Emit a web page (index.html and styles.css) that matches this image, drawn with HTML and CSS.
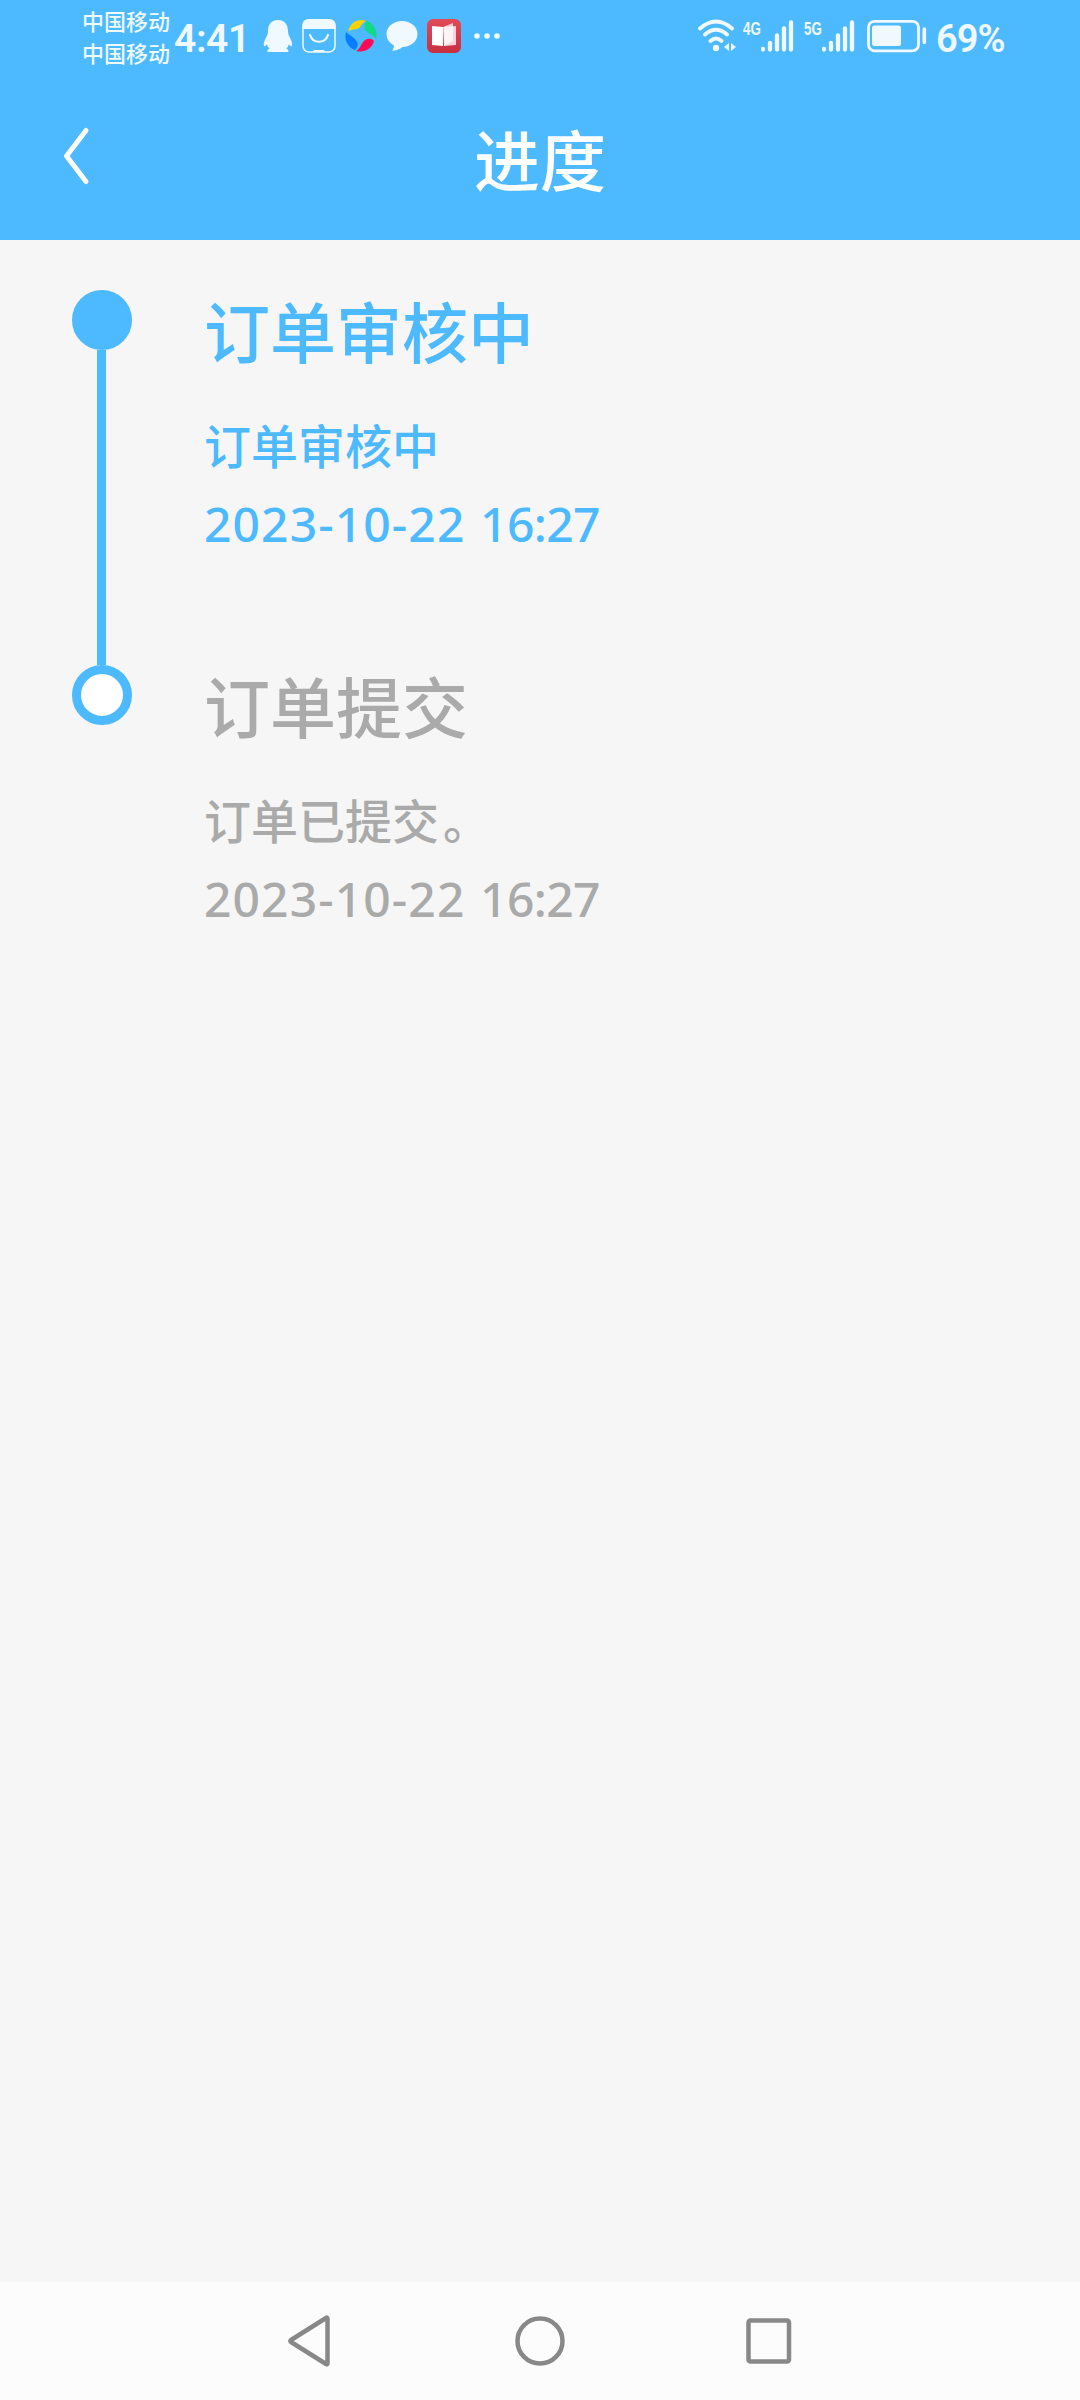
FILE: index.html
```html
<!DOCTYPE html>
<html lang="zh-CN">
<head>
<meta charset="utf-8">
<title>进度</title>
<link rel="stylesheet" href="styles.css">
</head>
<body>
<div class="screen">
  <header class="top">
    <div class="status">
      <div class="carriers"><span>中国移动</span><span>中国移动</span></div>
      <span class="clock">4:41</span>
      <div class="notices">
        <svg width="30" height="36" viewBox="0 0 30 36"><path fill="#eff9ff" d="M15 2C8.500 2 5 6.500 5 13c0 3-1 5-2.500 7.500C1 23.500.3 26.500 1 28c.6.700 2-.3 3-1.800.5 1.800 1.300 3.200 2.500 4.300C4.500 31.500 4 33 4.500 34h20.800c.5-1 0-2.500-2-3.500 1.200-1.100 2-2.500 2.500-4.300 1 1.500 2.400 2.500 3 1.800.7-1.500 0-4.500-1.500-7.500C26 18 25 16 25 13 25 6.500 21.500 2 15 2z"/></svg>
        <svg width="34" height="36" viewBox="0 0 34 36"><rect x="1" y="2" width="32" height="32" rx="6" fill="none" stroke="#eff9ff" stroke-width="1.500"/><path fill="#eff9ff" d="M.3 11V8Q.3 1 7 1h20q6.700 0 6.700 7v3zM11 34l1-2h10l1 2z"/><path d="M8 17c3 9 15 9 18 0" fill="none" stroke="#eff9ff" stroke-width="2.200" stroke-linecap="round"/></svg>
        <svg width="32" height="36" viewBox="0 0 32 36"><path fill="#ffd300" d="M3.500 13C5 5 13 0 21 3c-4 2-4 4-7 7-3 2-7 1-10.500 3z"/><path fill="#11d989" d="M22 3c8 3 11 11 9 18-2-4-5-4-9-7-4-4-3-9 0-11z"/><path fill="#ff0a59" d="M29 23c-2 8-10 12-18 10 4-2 4-5 7-9 3-4 9-4 11-1z"/><path fill="#087eff" d="M10 32C2 29-1 21 1 14c3 3 5 3 9 7 4 4 3 8 0 11z"/></svg>
        <svg width="32" height="36" viewBox="0 0 32 36"><path fill="#eff9ff" d="M16 3c8.500 0 15.500 5.500 15.500 13S24.500 29 16.500 29C14 31 10 33 6 32.800c1-1.300 2-3 2-5.300C3.500 25 .5 21 .5 16 .5 8.500 7.500 3 16 3z"/></svg>
        <svg width="34" height="36" viewBox="0 0 34 36"><defs><linearGradient id="book" x2="0" y2="1"><stop stop-color="#e34a58"/><stop offset="1" stop-color="#c9303f"/></linearGradient></defs><rect y="1" width="34" height="34" rx="6" fill="url(#book)"/><path fill="#fff" d="M5 8l11 1v19L5 27z"/><path fill="#ffd3dd" d="M17 9l12-1v19l-12 1z"/><path fill="#fff" d="M16 9l10-4v18l-9 5z" opacity=".72"/></svg>
        <svg class="more" width="26" height="36" viewBox="0 0 26 36"><g fill="#eff9ff"><circle cx="3" cy="18" r="2.800"/><circle cx="13" cy="18" r="2.800"/><circle cx="23" cy="18" r="2.800"/></g></svg>
      </div>
      <div class="system">
        <svg width="38" height="34" viewBox="0 0 38 34"><g fill="none" stroke="#eff9ff" stroke-width="3.800" stroke-linecap="round"><path d="M2 9.500Q18 -4.500 34 9.500M7 15.500Q18 6 29 15.500M12.500 22Q18 17 23.500 22"/></g><circle cx="18" cy="29" r="3.200" fill="#eff9ff"/><path fill="#eff9ff" d="M31 24v8l-5-4zM33 24v8l5-4z"/></svg>
        <span class="net">4G</span>
        <svg width="33" height="34" viewBox="0 0 33 34"><path d="M2 30v.5M9 24v6.500M16 16.500v14M23 9.500v21M30 3.500v27" stroke="#eff9ff" stroke-width="4.300" stroke-linecap="round"/></svg>
        <span class="net second">5G</span>
        <svg width="33" height="34" viewBox="0 0 33 34"><path d="M2 30v.5M9 24v6.500M16 16.500v14M23 9.500v21M30 3.500v27" stroke="#eff9ff" stroke-width="4.300" stroke-linecap="round"/></svg>
        <svg class="battery" width="60" height="34" viewBox="0 0 60 34"><rect x="1.500" y="2.300" width="50" height="29.500" rx="6" fill="none" stroke="#eff9ff" stroke-width="2.800"/><rect x="5" y="6.500" width="29" height="20.500" rx="2.500" fill="#eff9ff"/><path d="M57.300 10v13.500" stroke="#eff9ff" stroke-width="3.600" stroke-linecap="round"/></svg>
        <span class="percent">69%</span>
      </div>
    </div>
    <div class="titlebar">
      <svg class="back" width="28" height="60" viewBox="0 0 28 60"><path d="M24 4.500 4.500 30 24 55.500" fill="none" stroke="#fff" stroke-width="5" stroke-linecap="round" stroke-linejoin="round"/></svg>
      <h1 class="title">进度</h1>
    </div>
  </header>
  <main class="timeline">
    <section class="step current">
      <div class="rail"><i class="dot"></i><i class="line"></i></div>
      <div class="text"><h2>订单审核中</h2><p>订单审核中</p><time>2023-10-22 <span class="hour">16:27</span></time></div>
    </section>
    <section class="step">
      <div class="rail"><i class="dot"></i></div>
      <div class="text"><h2>订单提交</h2><p>订单已提交<span class="stop">。</span></p><time>2023-10-22 <span class="hour">16:27</span></time></div>
    </section>
  </main>
  <nav class="nav">
    <svg width="50" height="56" viewBox="0 0 50 56"><path d="M41.500 5.700v44.600q0 1.700-1.500.7L5 29q-1.300-1 0-2L40 5q1.500-1 1.500.7z" fill="none" stroke="#888" stroke-width="4.500" stroke-linejoin="round"/></svg>
    <svg width="50" height="56" viewBox="0 0 50 56"><circle cx="25" cy="28" r="22.500" fill="none" stroke="#888" stroke-width="4.500"/></svg>
    <svg width="50" height="56" viewBox="0 0 50 56"><rect x="4.500" y="7.500" width="40.500" height="41" rx="2" fill="none" stroke="#888" stroke-width="4.500"/></svg>
  </nav>
</div>
</body>
</html>
```
FILE: styles.css
```css
* { box-sizing: border-box; }
body { margin: 0; font-family: "Noto Sans CJK SC", sans-serif; }
svg { display: block; flex: none; }
.screen { display: flex; flex-direction: column; width: 1080px; height: 2400px; background: #f6f6f6; }
.top { height: 240px; background: #4dbaff; color: #fff; }
.status { display: flex; height: 72px; padding-left: 82px; color: #eff9ff; white-space: nowrap; }
.carriers { display: flex; flex-direction: column; width: 92px; padding-top: 4px; font-size: 22px; line-height: 32px; font-weight: 500; }
.clock { width: 88px; padding-top: 15px; font: 600 39px/48px Roboto, sans-serif; letter-spacing: -.4px; }
.notices { display: flex; gap: 9px; width: 242px; padding-top: 18px; margin-left: 1px; }
.more { margin-left: 4px; }
.system { display: flex; padding-top: 19px; margin-left: 193px; }
.net { width: 18px; margin-left: 7px; font: 700 18px/20px "Liberation Sans", sans-serif; transform-origin: left; transform: scaleX(.74); }
.net.second { margin-left: 10px; }
.battery { margin-left: 12px; }
.percent { margin: -4px 0 0 9px; font: 600 38px/48px Roboto, sans-serif; letter-spacing: -1px; }
.titlebar { position: relative; display: flex; justify-content: center; height: 168px; }
.back { position: absolute; left: 62px; top: 54px; }
.title { margin: 37px 0 0; font-size: 66px; line-height: 96px; font-weight: 500; }
.timeline { flex: 1; padding: 50px 0 0 72px; }
.step { display: flex; gap: 72px; height: 375px; color: #aaa; }
.current { color: #4dbaff; }
.rail { display: flex; flex-direction: column; align-items: center; width: 60px; }
.dot { flex: none; width: 60px; height: 60px; border: 9px solid #4dbaff; border-radius: 50%; background: #fff; }
.current .dot { background: #4dbaff; }
.line { flex: 1; width: 9px; margin-right: 1px; background: #4dbaff; }
.text { display: flex; flex-direction: column; white-space: nowrap; }
h2 { margin: -9px 0 0; font-size: 66px; line-height: 96px; font-weight: 500; }
p { margin: 32px 0 0; font-size: 47px; line-height: 70px; font-weight: 500; }
.stop { margin-left: 4px; }
time { margin-top: 9px; font: 500 48px/72px "Noto Sans", sans-serif; letter-spacing: 1.1px; word-spacing: 1px; }
.hour { letter-spacing: -.6px; }
.nav { display: flex; justify-content: center; gap: 179px; height: 118px; padding-top: 31px; background: #fcfcfc; }
```
